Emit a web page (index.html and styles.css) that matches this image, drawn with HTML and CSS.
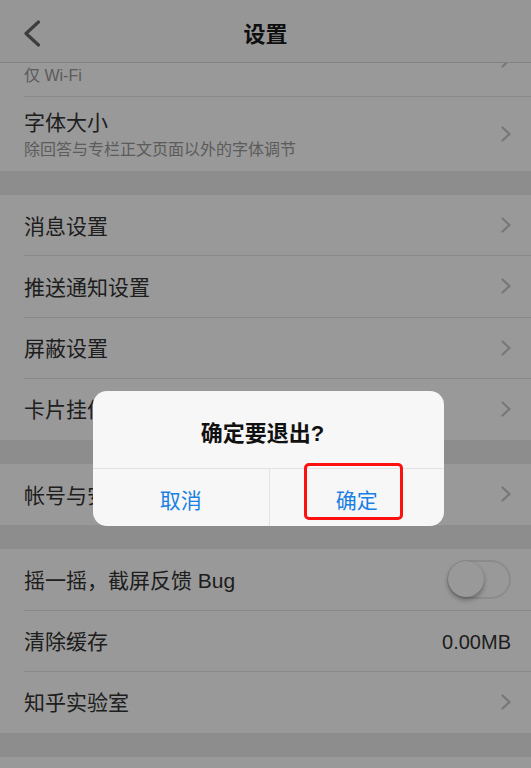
FILE: index.html
```html
<!DOCTYPE html>
<html lang="zh-CN">
<head>
    <meta charset="UTF-8">
    <meta name="viewport" content="width=device-width, initial-scale=1.0">
    <title>设置</title>
    <link rel="stylesheet" href="styles.css">
</head>
<body>
    <header class="nav-bar">
        <button class="back-btn" aria-label="返回">
            <svg width="18" height="27" viewBox="0 0 18 27">
                <polyline points="15.5,2 3,13.5 15.5,25" fill="none" stroke="#666" stroke-width="3.2" stroke-linecap="round" stroke-linejoin="round"/>
            </svg>
        </button>
        <h1 class="nav-title">设置</h1>
        <span></span>
    </header>

    <main class="settings">
        <section class="group">
            <div class="row row-tall">
                <div class="row-inner">
                    <div class="row-text">
                        <span class="row-title">视频自动播放</span>
                        <span class="row-sub">仅 Wi-Fi</span>
                    </div>
                    <svg class="chevron" width="10" height="16" viewBox="0 0 10 16"><polyline points="1.5,1.5 8.5,8 1.5,14.5"/></svg>
                </div>
            </div>
            <div class="row row-tall">
                <div class="row-inner">
                    <div class="row-text">
                        <span class="row-title">字体大小</span>
                        <span class="row-sub">除回答与专栏正文页面以外的字体调节</span>
                    </div>
                    <svg class="chevron" width="10" height="16" viewBox="0 0 10 16"><polyline points="1.5,1.5 8.5,8 1.5,14.5"/></svg>
                </div>
            </div>
        </section>

        <section class="group">
            <div class="row">
                <div class="row-inner">
                    <span class="row-title">消息设置</span>
                    <svg class="chevron" width="10" height="16" viewBox="0 0 10 16"><polyline points="1.5,1.5 8.5,8 1.5,14.5"/></svg>
                </div>
            </div>
            <div class="row">
                <div class="row-inner">
                    <span class="row-title">推送通知设置</span>
                    <svg class="chevron" width="10" height="16" viewBox="0 0 10 16"><polyline points="1.5,1.5 8.5,8 1.5,14.5"/></svg>
                </div>
            </div>
            <div class="row">
                <div class="row-inner">
                    <span class="row-title">屏蔽设置</span>
                    <svg class="chevron" width="10" height="16" viewBox="0 0 10 16"><polyline points="1.5,1.5 8.5,8 1.5,14.5"/></svg>
                </div>
            </div>
            <div class="row">
                <div class="row-inner">
                    <span class="row-title">卡片挂件设置</span>
                    <svg class="chevron" width="10" height="16" viewBox="0 0 10 16"><polyline points="1.5,1.5 8.5,8 1.5,14.5"/></svg>
                </div>
            </div>
        </section>

        <section class="group">
            <div class="row">
                <div class="row-inner">
                    <span class="row-title">帐号与安全</span>
                    <svg class="chevron" width="10" height="16" viewBox="0 0 10 16"><polyline points="1.5,1.5 8.5,8 1.5,14.5"/></svg>
                </div>
            </div>
        </section>

        <section class="group">
            <div class="row">
                <div class="row-inner">
                    <span class="row-title">摇一摇，截屏反馈 Bug</span>
                    <span class="switch"><span class="switch-knob"></span></span>
                </div>
            </div>
            <div class="row">
                <div class="row-inner">
                    <span class="row-title">清除缓存</span>
                    <span class="row-value">0.00MB</span>
                </div>
            </div>
            <div class="row">
                <div class="row-inner">
                    <span class="row-title">知乎实验室</span>
                    <svg class="chevron" width="10" height="16" viewBox="0 0 10 16"><polyline points="1.5,1.5 8.5,8 1.5,14.5"/></svg>
                </div>
            </div>
        </section>

        <!-- 下一组只露出一条边 -->
        <section class="group">
            <div class="row">
                <div class="row-inner"></div>
            </div>
        </section>
    </main>

    <!-- 退出确认弹窗 -->
    <div class="mask"></div>
    <div class="alert">
        <div class="alert-title">确定要退出?</div>
        <div class="alert-actions">
            <button class="alert-btn">取消</button>
            <button class="alert-btn">确定</button>
        </div>
        <span class="mark-box"></span>
    </div>
</body>
</html>
```

FILE: styles.css
```css
/* 设置页 */
body {
    margin: 0;
    padding: 0;
    height: 100vh;
    overflow: hidden;
    background-color: #ececec;
    font-family: "Liberation Sans", "Noto Sans CJK SC", sans-serif;
    color: #333;
}

.nav-bar {
    position: relative;
    z-index: 1;
    display: grid;
    grid-template-columns: 1fr auto 1fr;
    align-items: center;
    height: 63px;
    padding: 2px 0 0;
    box-sizing: border-box;
    background-color: #fbfbfb;
    border-bottom: 1px solid #d8d8d8;
}

.back-btn {
    justify-self: start;
    margin-left: 23px;
    padding: 3px 0 0;
    border: none;
    background: none;
    display: flex;
}

.nav-title {
    margin: 0;
    font-size: 22px;
    font-weight: bold;
    color: #1a1a1a;
}

/* 列表整体向上滚动了一截，压在导航栏下面 */
.settings {
    margin-top: -40px;
}

.group {
    background-color: #fff;
    margin-bottom: 24px;
}

.row {
    padding-left: 24px;
}

.row-inner {
    display: flex;
    align-items: center;
    justify-content: space-between;
    height: 61.25px;
    padding: 3px 20px 0 0;
    box-sizing: border-box;
    border-bottom: 1px solid #e4e4e4;
}

.row:last-child .row-inner {
    border-bottom-color: transparent;
}

.row-tall .row-inner {
    height: 74px;
}

.row-text {
    display: flex;
    flex-direction: column;
    gap: 3px;
}

.row-title {
    font-size: 21px;
    line-height: 26px;
    color: #333;
}

.row-sub {
    font-size: 16px;
    line-height: 22px;
    color: #999;
}

.row-value {
    font-size: 20px;
    color: #333;
}

.chevron {
    flex-shrink: 0;
    margin-bottom: 3px;
    fill: none;
    stroke: #c9c9cc;
    stroke-width: 2.3;
    stroke-linecap: round;
    stroke-linejoin: round;
}

.switch {
    display: flex;
    align-items: center;
    width: 64px;
    height: 39px;
    margin-bottom: 3px;
    box-sizing: border-box;
    border: 2px solid #e8e8e8;
    border-radius: 20px;
}

.switch-knob {
    width: 36px;
    height: 36px;
    margin-left: -1px;
    border-radius: 50%;
    background-color: #fff;
    box-shadow: 0 3px 5px rgba(0, 0, 0, 0.3), 0 0 1px rgba(0, 0, 0, 0.2);
}

/* 弹窗 */
.mask {
    position: fixed;
    z-index: 2;
    top: 0;
    left: 0;
    right: 0;
    bottom: 0;
    background-color: rgba(0, 0, 0, 0.4);
}

.alert {
    position: fixed;
    z-index: 3;
    top: 391px;
    left: 93px;
    width: 351px;
    border-radius: 14px;
    background-color: #f7f7f7;
}

.alert-title {
    height: 78px;
    display: flex;
    align-items: center;
    justify-content: center;
    padding: 2px 12px 0 0;
    box-sizing: border-box;
    font-size: 22px;
    font-weight: bold;
    color: #111;
    border-bottom: 1px solid #e2e2e2;
}

.alert-actions {
    display: grid;
    grid-template-columns: 1fr 1fr;
    height: 57px;
}

.alert-btn {
    border: none;
    background: none;
    padding: 2px 0 0;
    font-family: inherit;
    font-size: 21px;
    color: #1b80e4;
}

.alert-btn + .alert-btn {
    border-left: 1px solid #e2e2e2;
}

/* 红色标注框 */
.mark-box {
    position: absolute;
    left: 211px;
    top: 72px;
    width: 99px;
    height: 57px;
    box-sizing: border-box;
    border: 3.5px solid #fe1010;
    border-radius: 5px;
}
```
